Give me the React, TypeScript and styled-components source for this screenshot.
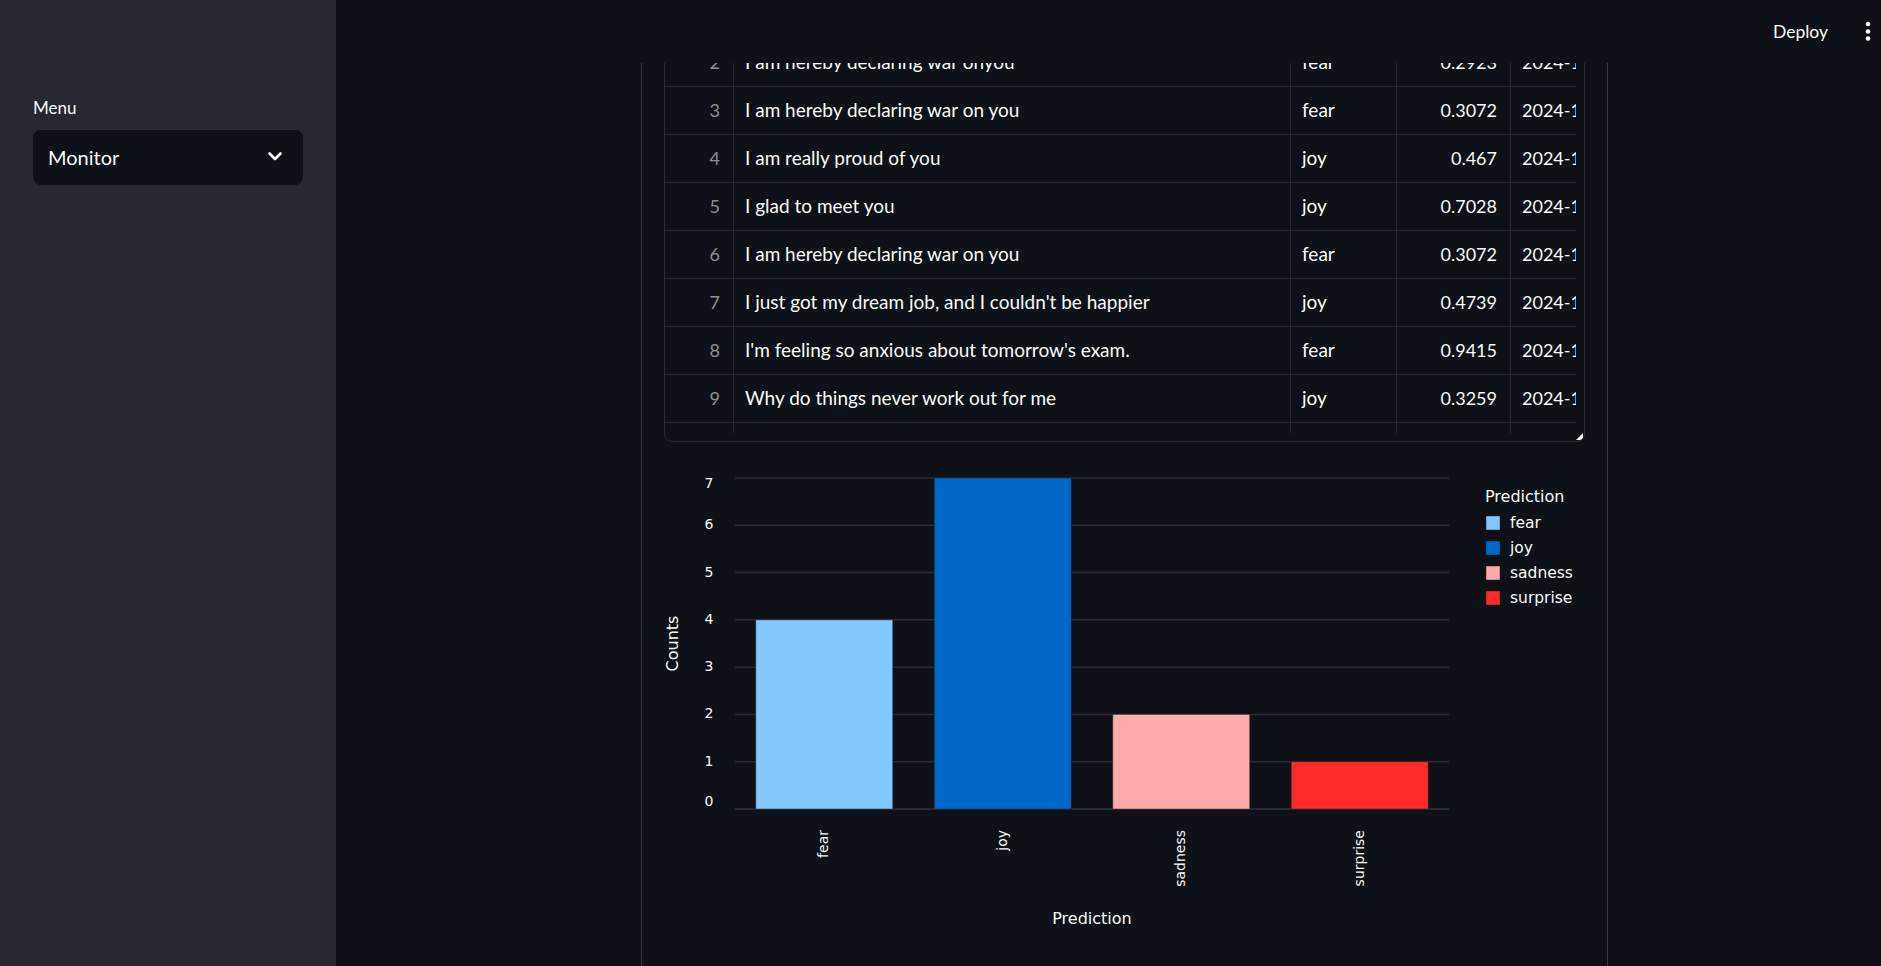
import styled, { createGlobalStyle } from "styled-components";

const GlobalStyle = createGlobalStyle`
  html, body {
    margin: 0;
    padding: 0;
    background: #0e1117;
    overflow: hidden;
  }
  * {
    box-sizing: border-box;
  }
`;

interface IRow {
  index: string;
  text: string;
  label: string;
  score: string;
  date: string;
}

const rows: IRow[] = [
  { index: "2", text: "I am hereby declaring war onyou", label: "fear", score: "0.2923", date: "2024-10-15 14:21:09" },
  { index: "3", text: "I am hereby declaring war on you", label: "fear", score: "0.3072", date: "2024-10-15 14:21:40" },
  { index: "4", text: "I am really proud of you", label: "joy", score: "0.467", date: "2024-10-15 14:22:03" },
  { index: "5", text: "I glad to meet you", label: "joy", score: "0.7028", date: "2024-10-15 14:22:31" },
  { index: "6", text: "I am hereby declaring war on you", label: "fear", score: "0.3072", date: "2024-10-15 14:23:12" },
  { index: "7", text: "I just got my dream job, and I couldn't be happier", label: "joy", score: "0.4739", date: "2024-10-15 14:24:02" },
  { index: "8", text: "I'm feeling so anxious about tomorrow's exam.", label: "fear", score: "0.9415", date: "2024-10-15 14:24:47" },
  { index: "9", text: "Why do things never work out for me", label: "joy", score: "0.3259", date: "2024-10-15 14:25:30" },
  { index: "", text: "", label: "", score: "", date: "" },
];

const chartData = [
  { name: "fear", count: 4, color: "#83c9ff" },
  { name: "joy", count: 7, color: "#0068c9" },
  { name: "sadness", count: 2, color: "#ffabab" },
  { name: "surprise", count: 1, color: "#ff2b2b" },
];

const PLOT_LEFT = 71;
const PLOT_RIGHT = 785;
const PLOT_TOP = 20;
const PLOT_BOTTOM = 351;
const MAX_COUNT = 7;
const UNIT = (PLOT_BOTTOM - PLOT_TOP) / MAX_COUNT;
const BAND = (PLOT_RIGHT - PLOT_LEFT) / chartData.length;
const BAR_WIDTH = 137;

const Chart = () => {
  const ticks = [0, 1, 2, 3, 4, 5, 6, 7];
  return (
    <ChartSvg width={920} height={480} viewBox="0 0 920 480">
      {ticks.map((t) => {
        const y = PLOT_BOTTOM - t * UNIT;
        // vega flushes first/last label inside the plot
        const labelY = t === MAX_COUNT ? y + 5.5 : t === 0 ? y - 7 : y;
        return (
          <g key={t}>
            <line x1={PLOT_LEFT} x2={PLOT_RIGHT} y1={y} y2={y} stroke={t === 0 ? "#31333b" : "#2a2c34"} strokeWidth={1.5} />
            <TickText x={49.5} y={labelY} textAnchor="end" dominantBaseline="middle">
              {t}
            </TickText>
          </g>
        );
      })}

      {chartData.map((d, i) => {
        const x = PLOT_LEFT + i * BAND + (BAND - BAR_WIDTH) / 2;
        const h = d.count * UNIT;
        return (
          <rect
            key={d.name}
            x={x}
            y={PLOT_BOTTOM - h}
            width={BAR_WIDTH}
            height={h}
            fill={d.color}
            stroke="#0e1117"
            strokeOpacity={0.45}
            strokeWidth={1}
          />
        );
      })}

      {chartData.map((d, i) => {
        const cx = PLOT_LEFT + i * BAND + BAND / 2;
        return (
          <TickText
            key={d.name}
            x={0}
            y={0}
            textAnchor="end"
            dominantBaseline="middle"
            transform={`translate(${cx} 372) rotate(-90)`}
          >
            {d.name}
          </TickText>
        );
      })}

      <TitleText x={0} y={0} textAnchor="middle" dominantBaseline="middle" transform="translate(9 185.5) rotate(-90)">
        Counts
      </TitleText>
      <TitleText x={428} y={461} textAnchor="middle" dominantBaseline="middle">
        Prediction
      </TitleText>

      <TitleText x={821} y={39} dominantBaseline="middle">
        Prediction
      </TitleText>
      {chartData.map((d, i) => {
        const cy = 65 + i * 25;
        return (
          <g key={d.name}>
            <rect x={822} y={cy - 7} width={14} height={14} fill={d.color} stroke="#0e1117" strokeOpacity={0.45} />
            <LegendText x={846} y={cy} dominantBaseline="middle">
              {d.name}
            </LegendText>
          </g>
        );
      })}
    </ChartSvg>
  );
};

const App = () => {
  return (
    <>
      <GlobalStyle />
      <Page>
        <Sidebar>
          <MenuLabel>Menu</MenuLabel>
          <SelectBox>
            <span>Monitor</span>
            <svg width="16" height="11" viewBox="0 0 16 11">
              <polyline points="2.5,2.5 8,8 13.5,2.5" fill="none" stroke="#fafafa" strokeWidth="2.6" strokeLinecap="round" strokeLinejoin="round" />
            </svg>
          </SelectBox>
        </Sidebar>
        <Main>
          <Header>
            <DeployButton>Deploy</DeployButton>
            <svg width="6" height="22" viewBox="0 0 6 22">
              <circle cx="3" cy="3" r="2.3" fill="#fafafa" />
              <circle cx="3" cy="10.5" r="2.3" fill="#fafafa" />
              <circle cx="3" cy="17.5" r="2.3" fill="#fafafa" />
            </svg>
          </Header>
          <Viewport>
            <Card>
              <TableFrame>
                <GridViewport>
                  {rows.map((row, i) => (
                    <Row key={i}>
                      <Cell $align="right" $muted>
                        {row.index}
                      </Cell>
                      <Cell>{row.text}</Cell>
                      <Cell>{row.label}</Cell>
                      <Cell $align="right" $numeric>
                        {row.score}
                      </Cell>
                      <Cell $numeric>{row.date}</Cell>
                    </Row>
                  ))}
                </GridViewport>
                <ResizeHandle />
              </TableFrame>
              <Chart />
            </Card>
          </Viewport>
        </Main>
      </Page>
    </>
  );
};

export default App;

const Page = styled.div`
  display: flex;
  width: 100vw;
  height: 100vh;
  font-family: Lato, "Noto Sans", sans-serif;
  color: #fafafa;
`;

const Sidebar = styled.aside`
  width: 336px;
  flex-shrink: 0;
  background-color: #262730;
  padding: 98px 33px 0;
`;

const MenuLabel = styled.div`
  font-size: 17px;
  line-height: 20px;
  margin-bottom: 12px;
`;

const SelectBox = styled.div`
  width: 270px;
  height: 55px;
  background-color: #0e1117;
  border-radius: 8px;
  display: flex;
  align-items: center;
  justify-content: space-between;
  padding: 0 20px 2px 15px;
  font-size: 20px;
`;

const Main = styled.main`
  flex: 1;
  min-width: 0;
  display: flex;
  flex-direction: column;
`;

const Header = styled.header`
  height: 63px;
  flex-shrink: 0;
  display: flex;
  justify-content: flex-end;
  align-items: center;
  padding-right: 10px;
`;

const DeployButton = styled.div`
  font-size: 17.5px;
  margin-right: 37px;
`;

const Viewport = styled.div`
  flex: 1;
  overflow: hidden;
  padding-left: 305px;
`;

const Card = styled.section`
  width: 967px;
  margin-top: -26px;
  min-height: 1100px;
  border: 1px solid rgba(250, 250, 250, 0.17);
  border-radius: 8px;
  padding: 0 22px 80px;
`;

const TableFrame = styled.div`
  position: relative;
  border: 1px solid rgba(250, 250, 250, 0.12);
  border-radius: 8px;
  padding: 0 8px 8px 0;
  overflow: hidden;
`;

const GridViewport = styled.div`
  height: 394px;
  overflow: hidden;
`;

const Row = styled.div`
  display: grid;
  grid-template-columns: 69px 557px 106px 114px 200px;
  height: 48px;
`;

const Cell = styled.div<{ $align?: "left" | "right"; $muted?: boolean; $numeric?: boolean }>`
  display: flex;
  align-items: center;
  justify-content: ${(props) => (props.$align === "right" ? "flex-end" : "flex-start")};
  padding: 0 13px 2px 11px;
  border-right: 1px solid #262930;
  border-bottom: 1px solid #262930;
  font-size: ${(props) => (props.$muted ? "18px" : props.$numeric ? "18px" : "19px")};
  white-space: nowrap;
  overflow: hidden;
  color: ${(props) => (props.$muted ? "rgba(250, 250, 250, 0.55)" : "#fafafa")};
`;

const ResizeHandle = styled.div`
  position: absolute;
  right: 1px;
  bottom: 1px;
  width: 0;
  height: 0;
  border-left: 7px solid transparent;
  border-bottom: 7px solid #fafafa;
`;

const ChartSvg = styled.svg`
  display: block;
  margin-top: 16px;
`;

const TickText = styled.text`
  font-family: "DejaVu Sans", sans-serif;
  font-size: 14px;
  fill: #fafafa;
`;

const TitleText = styled.text`
  font-family: "DejaVu Sans", sans-serif;
  font-size: 16px;
  fill: #fafafa;
`;

const LegendText = styled.text`
  font-family: "DejaVu Sans", sans-serif;
  font-size: 15.5px;
  fill: #fafafa;
`;
